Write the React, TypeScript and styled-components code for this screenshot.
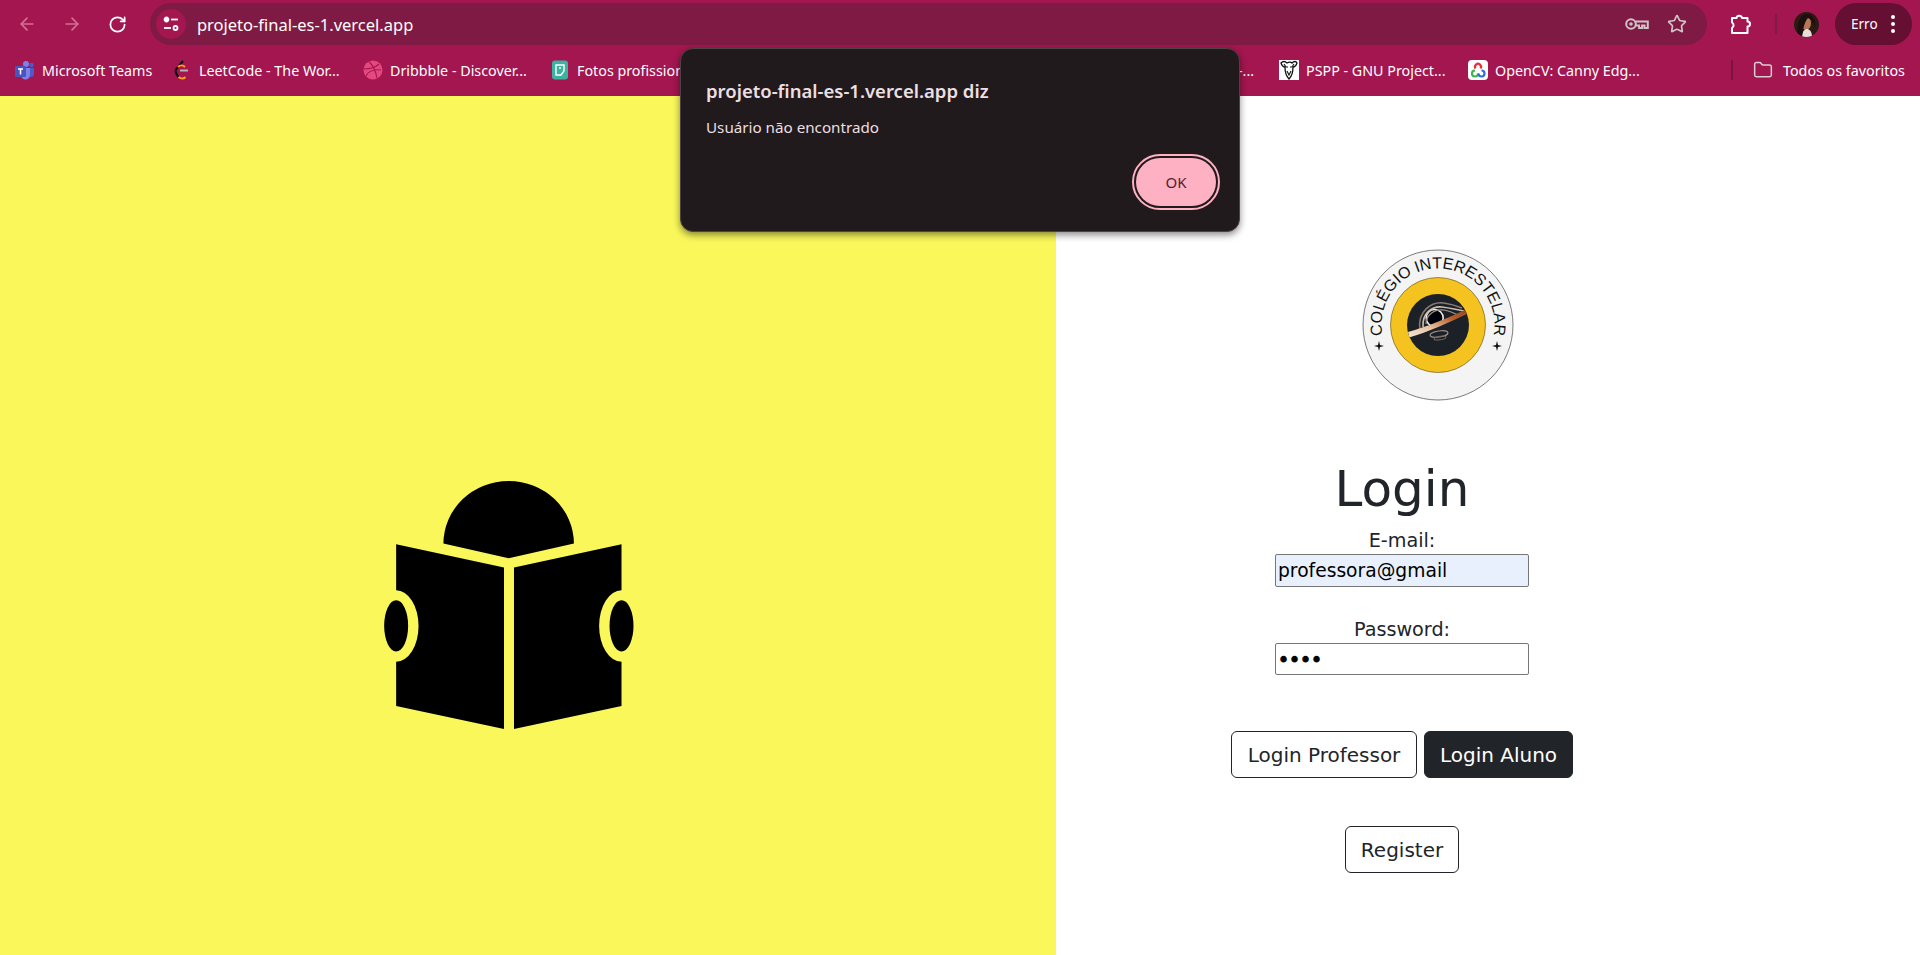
import React from "react";
import styled, { createGlobalStyle } from "styled-components";
import { ArrowLeft, ArrowRight, RotateCw, Star, Folder } from "lucide-react";

const PageStyle = createGlobalStyle`
  html, body {
    margin: 0;
    padding: 0;
    background: #fff;
  }
  #root {
    height: 955px;
    overflow: hidden;
  }
`;

function TuneIcon() {
  return (
    <svg width="18" height="18" viewBox="0 0 18 18" fill="none" stroke="#fff" strokeWidth="1.8">
      <circle cx="4.5" cy="4.5" r="2" fill="#fff" />
      <path d="M9 4.5h7" />
      <circle cx="13.5" cy="13" r="2" />
      <path d="M2 13h7" />
    </svg>
  );
}

function KeyIcon() {
  return (
    <svg width="24" height="14" viewBox="0 0 24 14" fill="none" stroke="#cfc3c8" strokeWidth="2">
      <circle cx="6" cy="7" r="4.8" />
      <circle cx="6" cy="7" r="0.8" fill="#cfc3c8" />
      <path d="M10.800 4.500h12v6.500h-3.300v-2.500h-2.400v2.500h-3V8.500h-3.300" />
    </svg>
  );
}

function ExtensionIcon() {
  return (
    <svg width="22" height="22" viewBox="0 0 22 22" fill="none" stroke="#fff" strokeWidth="2" strokeLinejoin="round">
      <path d="M2 5H6.500A2.800 2.800 0 0 1 12 5H17.500V8.500A2.500 2.500 0 0 1 17.500 13.500V20H2V15A3.200 3.200 0 0 0 2 9.500z" />
    </svg>
  );
}

function MenuDots() {
  return (
    <svg width="6" height="20" viewBox="0 0 6 20" fill="#fff">
      <circle cx="3" cy="3" r="2" />
      <circle cx="3" cy="10" r="2" />
      <circle cx="3" cy="17" r="2" />
    </svg>
  );
}

function Avatar() {
  return (
    <svg width="25" height="25" viewBox="0 0 25 25">
      <clipPath id="avatarClip"><circle cx="12.5" cy="12.5" r="12.5" /></clipPath>
      <g clipPath="url(#avatarClip)">
        <rect width="25" height="25" fill="#2d1a14" />
        <ellipse cx="12" cy="11" rx="5" ry="7" fill="#b5775a" />
        <path d="M8 25c0-6 3-8 5-8s5 2 5 8z" fill="#e8dfd8" />
        <path d="M4 25C2 12 6 2 13 2c6 0 9 6 8 13-2-5-4-8-7-9-3 3-5 10-6 19z" fill="#1d100c" />
      </g>
    </svg>
  );
}

function TeamsIcon() {
  return (
    <svg width="20" height="20" viewBox="0 0 20 20">
      <circle cx="11" cy="4" r="3" fill="#7b83eb" />
      <circle cx="16.5" cy="5" r="2.2" fill="#5059c9" />
      <path d="M13 8h6v6a3 3 0 0 1-6 0z" fill="#5059c9" />
      <path d="M6 8h9v7a4 4 0 0 1-9 0z" fill="#7b83eb" />
      <rect x="0" y="6" width="11" height="11" rx="1" fill="#4b53bc" />
      <path d="M3 9h5M5.500 9v5.500" stroke="#fff" strokeWidth="1.500" />
    </svg>
  );
}

function LeetIcon() {
  return (
    <svg width="20" height="20" viewBox="0 0 20 20" fill="none" strokeWidth="2">
      <path d="M11 1 3.500 10" stroke="#111" />
      <path d="M3.500 10c0 3 1 5 3 7" stroke="#111" />
      <path d="M6.500 17c2.500 2 5 2 7 0" stroke="#f7a11a" />
      <path d="M8 10.500h8" stroke="#b3b3b3" />
      <path d="M6 7c2-2 5-2 7 0" stroke="#f7a11a" />
    </svg>
  );
}

function DribbbleIcon() {
  return (
    <svg width="20" height="20" viewBox="0 0 20 20" fill="none">
      <circle cx="10" cy="10" r="9.500" fill="#e5487f" />
      <path d="M6 1.500c4 4 7 10 8 17M1 9c6 0 11-1 15-5M3 16c2-4 7-7 15-6" stroke="#a3174f" strokeWidth="1.100" />
    </svg>
  );
}

function FotosIcon() {
  return (
    <svg width="20" height="20" viewBox="0 0 20 20">
      <rect x="2" y="0.500" width="16" height="19" rx="3" fill="#3bb3a0" />
      <path d="M6 5h8v6l-3 4H6z" fill="none" stroke="#fff" strokeWidth="1.400" />
      <path d="M9 8h2" stroke="#fff" strokeWidth="1.400" />
    </svg>
  );
}

function GnuIcon() {
  return (
    <svg width="20" height="20" viewBox="0 0 20 20" fill="none">
      <rect width="20" height="20" fill="#fff" />
      <path d="M2 3c2-2 4-2 6 0 2-1 4-1 5 0 2-2 4-2 5 0-1 3-3 4-4 4 0 5-1 9-4 12-3-3-4-8-4-12-2 0-3-1-4-4z" stroke="#111" strokeWidth="1.300" />
      <path d="M7 7h2M11 7h2M8 11l2 4 2-4M5 4l2 3M15 4l-2 3" stroke="#111" strokeWidth="1.100" />
    </svg>
  );
}

function OpenCvIcon() {
  return (
    <svg width="20" height="20" viewBox="0 0 20 20" fill="none" strokeWidth="2.200">
      <rect width="20" height="20" rx="4" fill="#fff" />
      <path d="M7.500 8.500A3 3 0 1 1 12.500 8.500" stroke="#e8303a" />
      <path d="M7 10.500a3 3 0 1 0 3 3" stroke="#3db54a" />
      <path d="M10.500 13.500a3 3 0 1 0 3-3" stroke="#2b6fe0" />
    </svg>
  );
}

function ReaderIcon() {
  return (
    <ReaderSvg viewBox="72 62 750 745" fill="#000">
      <path d="M250 250A196 188 0 0 1 642 250L446 294z" />
      <path d="M108 252 432 322V807L108 738V605A67 107 0 0 0 108 390z" />
      <path d="M785 252 462 322V807L785 738V605A67 107 0 0 1 785 390z" />
      <ellipse cx="108" cy="497" rx="36" ry="77" />
      <ellipse cx="785" cy="497" rx="36" ry="77" />
    </ReaderSvg>
  );
}

function SchoolLogo() {
  return (
    <LogoSvg viewBox="0 0 152 152">
      <defs>
        <path id="logoArc" d="M21.300 90A56.500 56.500 0 1 1 130.700 90" />
        <linearGradient id="band" x1="0" y1="1" x2="1" y2="0">
          <stop offset="0" stopColor="#f4e6d6" />
          <stop offset="0.35" stopColor="#e8c4a4" />
          <stop offset="0.7" stopColor="#b8622f" />
          <stop offset="1" stopColor="#8a4526" />
        </linearGradient>
        <clipPath id="holeClip"><circle cx="76" cy="76" r="31" /></clipPath>
        <filter id="soft"><feGaussianBlur stdDeviation="0.450" /></filter>
      </defs>
      <circle cx="76" cy="76" r="75" fill="#f4f4f4" stroke="#444" strokeWidth="0.700" />
      <circle cx="76" cy="76" r="47.500" fill="#f5c31f" stroke="#3a3010" strokeWidth="0.500" />
      <circle cx="76" cy="76" r="31" fill="#1b2126" />
      <g clipPath="url(#holeClip)" fill="none">
        <g filter="url(#soft)">
          <circle cx="72.700" cy="69" r="8.500" fill="#05060a" stroke="#f2ece6" strokeWidth="1.600" />
          <path d="M61 78C60 64 70 57 80 58c9 1 15 3 22 4" stroke="#cbbdb0" strokeWidth="1.600" />
          <path d="M58 81C55 62 70 52 82 54c7 1 13 3 18 5" stroke="#8a7c72" strokeWidth="1.500" />
          <path d="M64 75C64 66 72 60 82 61c6 1 10 3 14 5" stroke="#a1938a" strokeWidth="1.200" />
          <ellipse cx="77" cy="85" rx="9" ry="3" stroke="#9a8c82" strokeWidth="1.200" transform="rotate(-8 77 85)" />
          <ellipse cx="78" cy="89" rx="6" ry="1.800" stroke="#75695f" strokeWidth="1" transform="rotate(-8 78 89)" />
          <path d="M46 83C64 78 86 69 105 60L105 65C88 73 66 83 47 88.500z" fill="url(#band)" />
        </g>
      </g>
      <LogoText>
        <textPath href="#logoArc" startOffset="50%" textAnchor="middle">COLÉGIO INTERESTELAR</textPath>
      </LogoText>
      <path d="M17 92l1 4 4 1-4 1-1 4-1-4-4-1 4-1z" fill="#111" />
      <path d="M135 92l1 4 4 1-4 1-1 4-1-4-4-1 4-1z" fill="#111" />
    </LogoSvg>
  );
}

export default function App() {
  return (
    <>
      <PageStyle />
      <Frame>
        <BrowserBar>
          <Toolbar>
            <NavIcon $dim><ArrowLeft size={20} strokeWidth={2} /></NavIcon>
            <NavIcon $dim><ArrowRight size={20} strokeWidth={2} /></NavIcon>
            <NavIcon><RotateCw size={19} strokeWidth={2.200} /></NavIcon>
            <AddressBar>
              <TuneBadge><TuneIcon /></TuneBadge>
              <UrlText>projeto-final-es-1.vercel.app</UrlText>
              <AddressEnd>
                <KeyIcon />
                <Star size={20} strokeWidth={2} color="#cfc3c8" />
              </AddressEnd>
            </AddressBar>
            <ExtensionSlot><ExtensionIcon /></ExtensionSlot>
            <BarDivider />
            <AvatarSlot><Avatar /></AvatarSlot>
            <ProfilePill>
              <span>Erro</span>
              <MenuDots />
            </ProfilePill>
          </Toolbar>
          <BookmarksBar>
            <Bookmark $width={157}><TeamsIcon /><span>Microsoft Teams</span></Bookmark>
            <Bookmark $width={191}><LeetIcon /><span>LeetCode - The Wor...</span></Bookmark>
            <Bookmark $width={187}><DribbbleIcon /><span>Dribbble - Discover...</span></Bookmark>
            <Bookmark $width={688}><FotosIcon /><span>Fotos profissionais...</span></Bookmark>
            <Bookmark $width={41}><span>-...</span></Bookmark>
            <Bookmark $width={189}><GnuIcon /><span>PSPP - GNU Project...</span></Bookmark>
            <Bookmark $width={263}><OpenCvIcon /><span>OpenCV: Canny Edg...</span></Bookmark>
            <BookmarkDivider />
            <AllBookmarks><Folder size={20} strokeWidth={1.800} color="#d9ced2" /><span>Todos os favoritos</span></AllBookmarks>
          </BookmarksBar>
        </BrowserBar>

        <Main>
          <ArtPanel><ReaderIcon /></ArtPanel>
          <FormPanel>
            <SchoolLogo />
            <Title>Login</Title>
            <FieldLabel htmlFor="email">E-mail:</FieldLabel>
            <TextField id="email" type="text" value="professora@gmail" readOnly $autofill />
            <FieldLabel htmlFor="password" $spaced>Password:</FieldLabel>
            <TextField id="password" type="password" value="1234" readOnly />
            <LoginRow>
              <ActionButton $width={186}>Login Professor</ActionButton>
              <ActionButton $width={149} $dark>Login Aluno</ActionButton>
            </LoginRow>
            <RegisterRow>
              <ActionButton $width={114}>Register</ActionButton>
            </RegisterRow>
          </FormPanel>
        </Main>

        <AlertBox>
          <AlertTitle>projeto-final-es-1.vercel.app diz</AlertTitle>
          <AlertMessage>Usuário não encontrado</AlertMessage>
          <AlertActions>
            <AlertButton>OK</AlertButton>
          </AlertActions>
        </AlertBox>
      </Frame>
    </>
  );
}

const uiFont = `"Noto Sans", "Open Sans", sans-serif`;
const pageFont = `"DejaVu Sans", Verdana, sans-serif`;

const Frame = styled.div`
  position: relative;
  width: 1920px;
  height: 955px;
  overflow: hidden;
  font-family: ${pageFont};
`;

const BrowserBar = styled.header`
  height: 96px;
  background: #a3164f;
  font-family: ${uiFont};
  color: #fff;
`;

const Toolbar = styled.div`
  display: flex;
  align-items: center;
  height: 48px;
  padding: 3px 8px 3px 5px;
  box-sizing: border-box;
`;

const NavIcon = styled.div<{ $dim?: boolean }>`
  display: flex;
  align-items: center;
  justify-content: center;
  width: 45px;
  height: 42px;
  color: ${(p) => (p.$dim ? "#d46f97" : "#fff")};
`;

const AddressBar = styled.div`
  display: flex;
  align-items: center;
  width: 1558px;
  height: 42px;
  margin-left: 10px;
  padding: 0 20px 0 6px;
  box-sizing: border-box;
  border-radius: 21px;
  background: #7f1a44;
`;

const TuneBadge = styled.div`
  display: flex;
  align-items: center;
  justify-content: center;
  width: 30px;
  height: 30px;
  border-radius: 50%;
  background: #a3164f;
`;

const UrlText = styled.span`
  margin-left: 11px;
  font-size: 16.500px;
`;

const AddressEnd = styled.div`
  display: flex;
  align-items: center;
  gap: 18px;
  margin-left: auto;
`;

const ExtensionSlot = styled.div`
  display: flex;
  justify-content: center;
  width: 68px;
`;

const BarDivider = styled.div`
  width: 2px;
  height: 20px;
  background: #7f1a44;
`;

const AvatarSlot = styled.div`
  display: flex;
  justify-content: center;
  width: 58px;
`;

const ProfilePill = styled.div`
  display: flex;
  align-items: center;
  justify-content: space-between;
  width: 77px;
  height: 42px;
  padding: 0 16px;
  box-sizing: border-box;
  border-radius: 21px;
  background: #650f33;
  font-size: 13.500px;
`;

const BookmarksBar = styled.nav`
  display: flex;
  align-items: center;
  height: 48px;
  padding: 0 0 4px 15px;
  box-sizing: border-box;
  font-size: 14.300px;
`;

const Bookmark = styled.div<{ $width: number }>`
  display: flex;
  align-items: center;
  gap: 7px;
  flex: none;
  width: ${(p) => p.$width}px;
  white-space: nowrap;
`;

const BookmarkDivider = styled.div`
  flex: none;
  width: 2px;
  height: 20px;
  background: #7a1340;
`;

const AllBookmarks = styled.div`
  display: flex;
  align-items: center;
  gap: 10px;
  margin-left: 20px;
  white-space: nowrap;
`;

const Main = styled.main`
  display: flex;
  height: 859px;
`;

const ArtPanel = styled.section`
  flex: none;
  width: 1056px;
  padding: 385px 0 0 384px;
  box-sizing: border-box;
  background: #f9f75a;
`;

const ReaderSvg = styled.svg`
  display: block;
  width: 250px;
  height: 248px;
`;

const FormPanel = styled.section`
  display: flex;
  flex-direction: column;
  align-items: center;
  width: 692px;
  padding-top: 153px;
  box-sizing: border-box;
  color: #212529;
`;

const LogoSvg = styled.svg`
  display: block;
  flex: none;
  width: 152px;
  height: 152px;
  margin-left: 72px;
`;

const LogoText = styled.text`
  font-family: "Liberation Sans", Arial, sans-serif;
  font-size: 16px;
  fill: #111;
`;

const Title = styled.h1`
  margin: 59px 0 9px;
  font-size: 50px;
  font-weight: 400;
  line-height: 58px;
`;

const FieldLabel = styled.label<{ $spaced?: boolean }>`
  display: block;
  margin-top: ${(p) => (p.$spaced ? "29px" : "0")};
  font-size: 19.200px;
  line-height: 27px;
`;

const TextField = styled.input<{ $autofill?: boolean }>`
  display: block;
  flex: none;
  width: 254px;
  height: ${(p) => (p.$autofill ? "33px" : "32px")};
  padding: 1px 2px;
  box-sizing: border-box;
  border: 1px solid #767676;
  border-radius: 2px;
  outline: none;
  background: ${(p) => (p.$autofill ? "#e8f0fe" : "#fff")};
  color: #000;
  font-family: ${pageFont};
  font-size: 18.700px;
  -webkit-text-stroke: ${(p) => (p.$autofill ? "0" : "1px #000")};
`;

const LoginRow = styled.div`
  display: flex;
  gap: 7px;
  margin-top: 56px;
`;

const RegisterRow = styled.div`
  margin-top: 48px;
`;

const ActionButton = styled.button<{ $dark?: boolean; $width: number }>`
  width: ${(p) => p.$width}px;
  height: 47px;
  padding: 0;
  box-sizing: border-box;
  border: 1px solid #212529;
  border-radius: 6px;
  background: ${(p) => (p.$dark ? "#212529" : "#fff")};
  color: ${(p) => (p.$dark ? "#fff" : "#212529")};
  font-family: ${pageFont};
  font-size: 20px;
`;

const AlertBox = styled.div`
  position: absolute;
  top: 48px;
  left: 680px;
  width: 560px;
  height: 184px;
  padding: 29px 22px 0 25px;
  box-sizing: border-box;
  border: 1px solid #4a4446;
  border-radius: 13px;
  background: #211a1c;
  box-shadow: 0 3px 7px rgba(0, 0, 0, 0.45);
  color: #ecdfe2;
  font-family: ${uiFont};
`;

const AlertTitle = styled.div`
  font-size: 18.500px;
  font-weight: 600;
  line-height: 26px;
`;

const AlertMessage = styled.div`
  margin-top: 13px;
  font-size: 15.200px;
  line-height: 20px;
`;

const AlertActions = styled.div`
  display: flex;
  justify-content: flex-end;
  margin-top: 21px;
`;

const AlertButton = styled.button`
  width: 80px;
  height: 48px;
  margin-right: 1px;
  padding: 0;
  border: 0;
  border-radius: 24px;
  outline: 2px solid #ffb1c4;
  outline-offset: 2px;
  background: #ffb1c4;
  color: #4d1f30;
  font-family: ${uiFont};
  font-size: 15px;
`;
